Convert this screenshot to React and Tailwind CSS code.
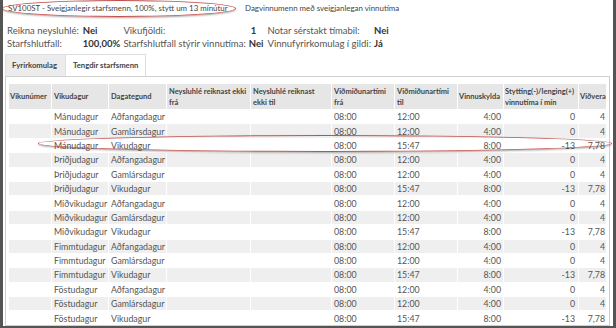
import React from 'react';

const rows = [
  ['Mánudagur', 'Aðfangadagur', '08:00', '12:00', '4:00', '0', '4'],
  ['Mánudagur', 'Gamlársdagur', '08:00', '12:00', '4:00', '0', '4'],
  ['Mánudagur', 'Vikudagur', '08:00', '15:47', '8:00', '-13', '7,78'],
  ['Þriðjudagur', 'Aðfangadagur', '08:00', '12:00', '4:00', '0', '4'],
  ['Þriðjudagur', 'Gamlársdagur', '08:00', '12:00', '4:00', '0', '4'],
  ['Þriðjudagur', 'Vikudagur', '08:00', '15:47', '8:00', '-13', '7,78'],
  ['Miðvikudagur', 'Aðfangadagur', '08:00', '12:00', '4:00', '0', '4'],
  ['Miðvikudagur', 'Gamlársdagur', '08:00', '12:00', '4:00', '0', '4'],
  ['Miðvikudagur', 'Vikudagur', '08:00', '15:47', '8:00', '-13', '7,78'],
  ['Fimmtudagur', 'Aðfangadagur', '08:00', '12:00', '4:00', '0', '4'],
  ['Fimmtudagur', 'Gamlársdagur', '08:00', '12:00', '4:00', '0', '4'],
  ['Fimmtudagur', 'Vikudagur', '08:00', '15:47', '8:00', '-13', '7,78'],
  ['Föstudagur', 'Aðfangadagur', '08:00', '12:00', '4:00', '0', '4'],
  ['Föstudagur', 'Gamlársdagur', '08:00', '12:00', '4:00', '0', '4'],
  ['Föstudagur', 'Vikudagur', '08:00', '15:47', '8:00', '-13', '7,78'],
];

function App() {
  return (
    <div className="relative w-[616px] h-[328px] bg-white overflow-hidden border-x-[3px] border-b-[2px] border-[#555] font-['Lato','Liberation_Sans',sans-serif] text-[#555]">
      {/* haus */}
      <div className="flex items-center h-[17px] text-[7.9px] text-[#444] whitespace-nowrap">
        <span className="pl-[5px] w-[240px]">SV100ST - Sveigjanlegir starfsmenn, 100%, stytt um 13 mínútur</span>
        <span className="pl-[2px]">Dagvinnumenn með sveigjanlegan vinnutíma</span>
      </div>

      {/* upplýsingar */}
      <div className="mt-[7px] pl-[4px] text-[9.5px] leading-[13px] whitespace-nowrap">
        <div className="inline-grid grid-cols-[auto_auto_auto_auto_auto_auto] gap-x-[3px]">
          <span className="pr-[1px]">Reikna neysluhlé:</span>
          <span className="font-bold text-[#333]">Nei</span>
          <span>Vikufjöldi:</span>
          <span className="font-bold text-[#333] pl-[2px]">1</span>
          <span className="pl-[1px]">Notar sérstakt tímabil:</span>
          <span className="font-bold text-[#333]">Nei</span>
          <span>Starfshlutfall:</span>
          <span className="font-bold text-[#333]">100,00%</span>
          <span>Starfshlutfall stýrir vinnutíma:</span>
          <span className="font-bold text-[#333]">Nei</span>
          <span className="pl-[1px]">Vinnufyrirkomulag í gildi:</span>
          <span className="font-bold text-[#333]">Já</span>
        </div>
      </div>

      {/* flipar */}
      <div className="flex mt-[4px] ml-[2px] h-[22px] text-[7.7px] font-bold text-[#444] whitespace-nowrap">
        <div className="flex items-center px-[6px] w-[61px] bg-[#ececec] border border-b-0 border-[#e0e0e0]">Fyrirkomulag</div>
        <div className="flex items-center px-[7px] w-[80px] bg-white border border-l-0 border-b-0 border-[#ddd]">Tengdir starfsmenn</div>
      </div>

      {/* tafla */}
      <div className="ml-[2px] mr-[3px] h-[250px] border border-[#cfcfcf] pt-[6px] px-[2px]">
        <table className="table-fixed border-separate border-spacing-[1px] w-[599px] text-[8.8px] leading-[13px]">
          <colgroup>
            <col className="w-[42px]" />
            <col className="w-[56px]" />
            <col className="w-[57px]" />
            <col className="w-[83px]" />
            <col className="w-[80px]" />
            <col className="w-[62px]" />
            <col className="w-[62px]" />
            <col className="w-[45px]" />
            <col className="w-[74px]" />
            <col className="w-[27px]" />
          </colgroup>
          <thead>
            <tr className="h-[25px] bg-[#e6e6e6] text-[7.5px] text-[#444] leading-[11px] text-left whitespace-nowrap">
              <th className="px-[1px] font-bold overflow-hidden">Vikunúmer</th>
              <th className="px-[2px] font-bold">Vikudagur</th>
              <th className="px-[2px] font-bold">Dagategund</th>
              <th className="px-[2px] font-bold overflow-hidden">Neysluhlé reiknast ekki<br />frá</th>
              <th className="px-[2px] font-bold">Neysluhlé reiknast<br />ekki til</th>
              <th className="px-[2px] font-bold overflow-hidden">Viðmiðunartími<br />frá</th>
              <th className="px-[2px] font-bold overflow-hidden">Viðmiðunartími<br />til</th>
              <th className="px-[1px] font-bold overflow-hidden">Vinnuskylda</th>
              <th className="px-[1px] font-bold overflow-hidden">Stytting(-)/lenging(+)<br />vinnutíma í mín</th>
              <th className="px-[1px] font-bold overflow-hidden">Viðvera</th>
            </tr>
          </thead>
          <tbody>
            {rows.map((r, i) => (
              <tr key={i} className={i % 2 === 0 ? 'h-[13.4px] bg-white' : 'h-[13.4px] bg-[#efefef]'}>
                <td></td>
                <td className="px-[2px] whitespace-nowrap">{r[0]}</td>
                <td className="px-[2px] whitespace-nowrap">{r[1]}</td>
                <td></td>
                <td></td>
                <td className="px-[2px]">{r[2]}</td>
                <td className="px-[2px]">{r[3]}</td>
                <td className="px-[2px] text-right">{r[4]}</td>
                <td className="px-[3px] text-right">{r[5]}</td>
                <td className="px-[1px] text-right">{r[6]}</td>
              </tr>
            ))}
          </tbody>
        </table>
      </div>

      {/* rauðir hringir */}
      <div className="absolute left-[-1px] top-[0px] w-[234px] h-[17px] rounded-[50%] border-[1.5px] border-[#c0504d] shadow-[0_1px_2px_rgba(0,0,0,0.35)]"></div>
      <div className="absolute left-[35px] top-[135px] w-[574px] h-[17px] rounded-[50%] border-[1.5px] border-[#c0504d] shadow-[0_1px_2px_rgba(0,0,0,0.35)]"></div>
    </div>
  );
}

export default App;
